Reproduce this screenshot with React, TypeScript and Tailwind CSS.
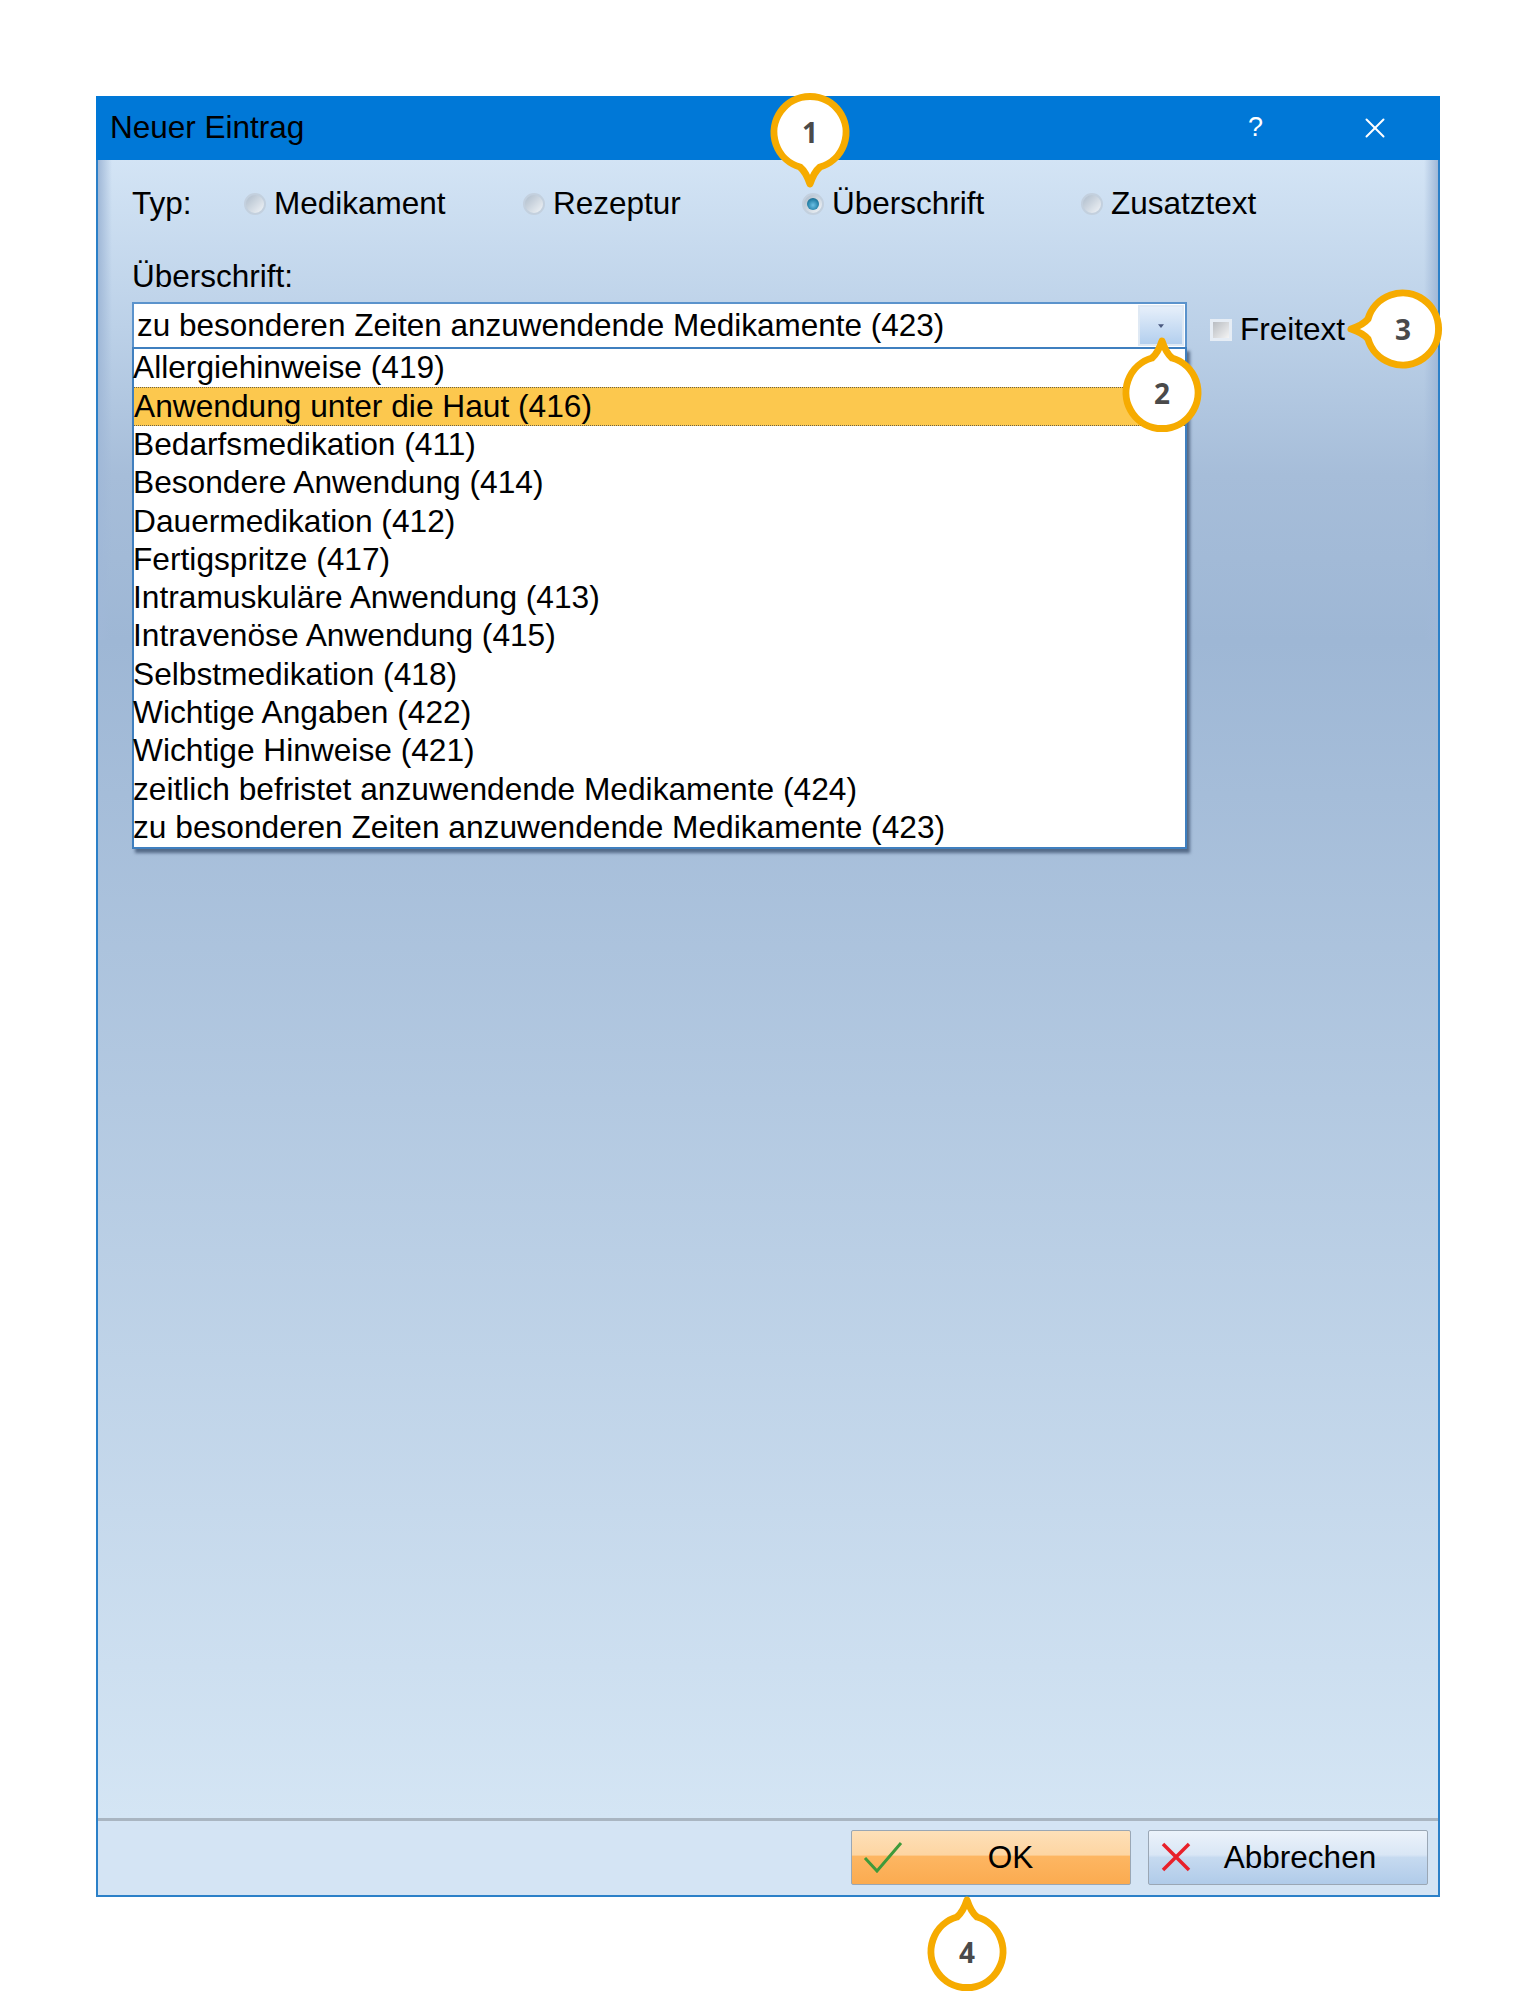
import { X } from "lucide-react";

const rows = [
  "Allergiehinweise (419)",
  "Anwendung unter die Haut (416)",
  "Bedarfsmedikation (411)",
  "Besondere Anwendung (414)",
  "Dauermedikation (412)",
  "Fertigspritze (417)",
  "Intramuskuläre Anwendung (413)",
  "Intravenöse Anwendung (415)",
  "Selbstmedikation (418)",
  "Wichtige Angaben (422)",
  "Wichtige Hinweise (421)",
  "zeitlich befristet anzuwendende Medikamente (424)",
  "zu besonderen Zeiten anzuwendende Medikamente (423)",
];

function Radio({ label, checked }: { label: string; checked?: boolean }) {
  return (
    <div className="flex items-center gap-[8px]">
      <span className="flex h-[22px] w-[22px] items-center justify-center rounded-full border-2 border-[#c3d0de] bg-gradient-to-br from-[#aebccb] to-[#f2f5f8]">
        {checked && (
          <span className="h-[12px] w-[12px] rounded-full bg-[radial-gradient(circle_at_50%_60%,#6cc0e4,#2a86ad_55%,#0f5170)]" />
        )}
      </span>
      <span>{label}</span>
    </div>
  );
}

function Callout({ n, pos, turn }: { n: number; pos: string; turn: string }) {
  return (
    <div className={`absolute flex h-[120px] w-[120px] items-center justify-center ${pos}`}>
      <svg viewBox="-60 -60 120 120" className={`absolute inset-0 h-full w-full ${turn}`}>
        <path
          d="M -10 -35 Q -4 -40 0 -52 Q 4 -40 10 -35 A 36 36 0 1 1 -10 -35 Z"
          fill="#fff"
          stroke="#f6ab00"
          strokeWidth="7"
          strokeLinejoin="round"
        />
      </svg>
      <span className="relative font-['Open_Sans',sans-serif] text-[28px] font-bold text-[#4a4a4a]">{n}</span>
    </div>
  );
}

export default function App() {
  return (
    <div className="relative h-[1994px] w-[1536px] bg-white pl-[96px] pt-[96px] font-['Liberation_Sans',Arial,sans-serif] text-[31.5px] text-black">
      <div className="flex h-[1801px] w-[1344px] flex-col border-2 border-t-0 border-[#2b80c8]">
        <div className="-mx-[2px] flex h-[64px] shrink-0 items-center bg-[#0078d7] pb-[1px] pl-[14px]">
          <span className="flex-1">Neuer Eintrag</span>
          <span className="mr-[95px] text-[27px] text-white">?</span>
          <X className="mr-[48px] h-[34px] w-[34px] text-white" strokeWidth={1.4} />
        </div>

        <div className="relative flex-1 bg-[linear-gradient(to_bottom,#d3e4f5,#bcd1e8_10%,#a6bdd9_19%,#9eb7d5_29%,#d4e5f4)] pl-[34px] pt-[25px]">
          {/* soft darker edges at the top of the panel */}
          <div className="pointer-events-none absolute left-0 top-0 h-[480px] w-full bg-[linear-gradient(to_right,#a0b8d7,transparent_14px,transparent_calc(100%-14px),#a0b8d7)]" />

          <div className="flex h-[38px] items-center">
            <span className="w-[112px]">Typ:</span>
            <div className="grid grid-cols-[279px_279px_279px_279px]">
              <Radio label="Medikament" />
              <Radio label="Rezeptur" />
              <Radio checked label="Überschrift" />
              <Radio label="Zusatztext" />
            </div>
          </div>

          <div className="mt-[34px] leading-[38px]">Überschrift:</div>

          <div className="mt-[7px] flex items-start">
            <div className="w-[1055px]">
              <div className="flex h-[45px] items-center border-2 border-b-0 border-[#5b93cc] bg-white pl-[3px] pr-[1px]">
                <span className="flex-1">zu besonderen Zeiten anzuwendende Medikamente (423)</span>
                <span className="flex h-[41px] w-[46px] items-center justify-center border-2 border-[#dfe9f4] bg-gradient-to-b from-[#e6effa] to-[#b3cfee]">
                  <svg viewBox="0 0 8 5" className="h-[4px] w-[6px]">
                    <path d="M0 0H8L4 5Z" fill="#4b5a80" />
                  </svg>
                </span>
              </div>
              <ul className="border-2 border-[#3f7fbf] bg-white text-[31.7px] shadow-[3px_4px_3px_rgba(40,60,90,0.65)]">
                {rows.map((row, i) => (
                  <li
                    key={row}
                    className={`-ml-[1px] flex h-[38.3px] items-center ${i === 1 ? "ml-0 border-y border-dotted border-[#6b6248] bg-[#fcc84e]" : ""}`}
                  >
                    {row}
                  </li>
                ))}
              </ul>
            </div>

            <div className="ml-[23px] mt-[9px] flex h-[38px] items-center gap-[8px]">
              <span className="flex h-[22px] w-[22px] items-center justify-center border-[3px] border-[#e6edf5] bg-gradient-to-br from-[#b9bdc2] to-[#f4f4f4]" />
              <span>Freitext</span>
            </div>
          </div>
        </div>

        <div className="flex h-[77px] shrink-0 justify-end gap-[17px] border-t-[3px] border-[#a9b5c1] bg-[#d4e4f4] pr-[10px] pt-[9px]">
          <button className="relative flex h-[55px] w-[280px] items-center justify-center rounded-[2px] border border-[#9aa7b5] bg-[linear-gradient(to_bottom,#fee0b8,#fdd5a2_45%,#fdb662_48%,#fbab50)]">
            <svg viewBox="0 0 40 32" className="absolute left-[11px] top-[10px] h-[32px] w-[40px]">
              <path d="M2 17 L14 30 L38 2" fill="none" stroke="#3f9a3a" strokeWidth="3" />
            </svg>
            <span className="ml-[39px]">OK</span>
          </button>
          <button className="relative flex h-[55px] w-[280px] items-center justify-center rounded-[2px] border border-[#9aa7b5] bg-[linear-gradient(to_bottom,#ecf3fb,#d9e6f5_45%,#c6daf0_50%,#b0cbe9)]">
            <svg viewBox="0 0 30 30" className="absolute left-[12px] top-[11px] h-[30px] w-[30px]">
              <path d="M2 2 L28 28 M28 2 L2 28" fill="none" stroke="#e8202a" strokeWidth="3.5" />
            </svg>
            <span className="ml-[24px]">Abbrechen</span>
          </button>
        </div>
      </div>

      <Callout n={1} pos="left-[750px] top-[72px]" turn="rotate-180" />
      <Callout n={2} pos="left-[1102px] top-[333px]" turn="" />
      <Callout n={3} pos="left-[1343px] top-[269px]" turn="-rotate-90" />
      <Callout n={4} pos="left-[907px] top-[1892px]" turn="" />
    </div>
  );
}
